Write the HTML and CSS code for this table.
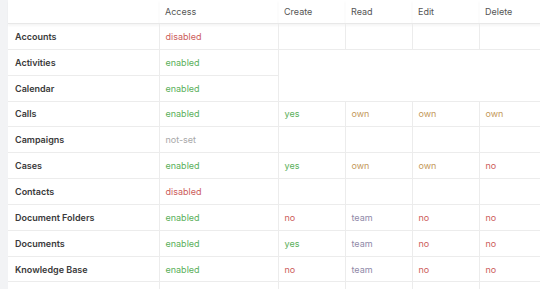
FILE: index.html
```html
<!DOCTYPE html>
<html>
<head>
<meta charset="utf-8">
<link rel="stylesheet" href="styles.css">
</head>
<body>
<div class="panel">
<table class="acl">
  <thead>
    <tr>
      <th class="c-scope"></th>
      <th class="c-access">Access</th>
      <th class="c-act">Create</th>
      <th class="c-act">Read</th>
      <th class="c-act">Edit</th>
      <th class="c-del">Delete</th>
    </tr>
  </thead>
  <tbody>
    <tr>
      <td class="scope">Accounts</td>
      <td class="disabled">disabled</td>
      <td></td><td></td><td></td><td></td>
    </tr>
    <tr>
      <td class="scope">Activities</td>
      <td class="enabled">enabled</td>
      <td class="blank" colspan="4" rowspan="2"></td>
    </tr>
    <tr>
      <td class="scope">Calendar</td>
      <td class="enabled">enabled</td>
    </tr>
    <tr>
      <td class="scope">Calls</td>
      <td class="enabled">enabled</td>
      <td class="yes">yes</td>
      <td class="own">own</td>
      <td class="own">own</td>
      <td class="own">own</td>
    </tr>
    <tr>
      <td class="scope">Campaigns</td>
      <td class="notset">not-set</td>
      <td></td><td></td><td></td><td></td>
    </tr>
    <tr>
      <td class="scope">Cases</td>
      <td class="enabled">enabled</td>
      <td class="yes">yes</td>
      <td class="own">own</td>
      <td class="own">own</td>
      <td class="no">no</td>
    </tr>
    <tr>
      <td class="scope">Contacts</td>
      <td class="disabled">disabled</td>
      <td></td><td></td><td></td><td></td>
    </tr>
    <tr>
      <td class="scope">Document Folders</td>
      <td class="enabled">enabled</td>
      <td class="no">no</td>
      <td class="team">team</td>
      <td class="no">no</td>
      <td class="no">no</td>
    </tr>
    <tr>
      <td class="scope">Documents</td>
      <td class="enabled">enabled</td>
      <td class="yes">yes</td>
      <td class="team">team</td>
      <td class="no">no</td>
      <td class="no">no</td>
    </tr>
    <tr>
      <td class="scope">Knowledge Base</td>
      <td class="enabled">enabled</td>
      <td class="no">no</td>
      <td class="team">team</td>
      <td class="no">no</td>
      <td class="no">no</td>
    </tr>
    <tr>
      <td class="scope"></td>
      <td></td><td></td><td></td><td></td><td></td>
    </tr>
  </tbody>
</table>
</div>
</body>
</html>
```

FILE: styles.css
```css
html, body {
  margin: 0;
  padding: 0;
  background: #f2f3f5;
  overflow: hidden;
  height: 289px;
}

.panel {
  margin-left: 8px;
  background: #fff;
  width: 560px;
}

.acl {
  border-collapse: collapse;
  table-layout: fixed;
  width: 560px;
  font-family: Inter, "Noto Sans", sans-serif;
  font-size: 9px;
  color: #333;
}

.acl th {
  height: 23px;
  padding: 0 0 0 6px;
  text-align: left;
  font-weight: 400;
  color: #555;
  border-bottom: 1px solid #e8e8e8;
  box-shadow: 0 2px 2px rgba(0, 0, 0, 0.04);
  vertical-align: middle;
}

.c-scope { width: 145px; }
.c-access { width: 113px; }
.c-act { width: 61px; }
.c-del { width: auto; }

.acl td {
  height: 24.85px;
  padding: 0 0 0 6px;
  border: 1px solid #ececec;
  border-top: none;
  vertical-align: middle;
  white-space: nowrap;
}

.acl td:first-child { border-left: none; }

.acl td.scope {
  font-weight: 600;
  color: #3a3a3a;
  padding-left: 7px;
}

.disabled { color: #cc5c5a; }
.enabled { color: #5aaf5a; }
.notset { color: #a8a8a8; }
.yes { color: #5aaf5a; }
.own { color: #c4995a; }
.team { color: #8f89a8; }
.no { color: #cc5c5a; }
```
